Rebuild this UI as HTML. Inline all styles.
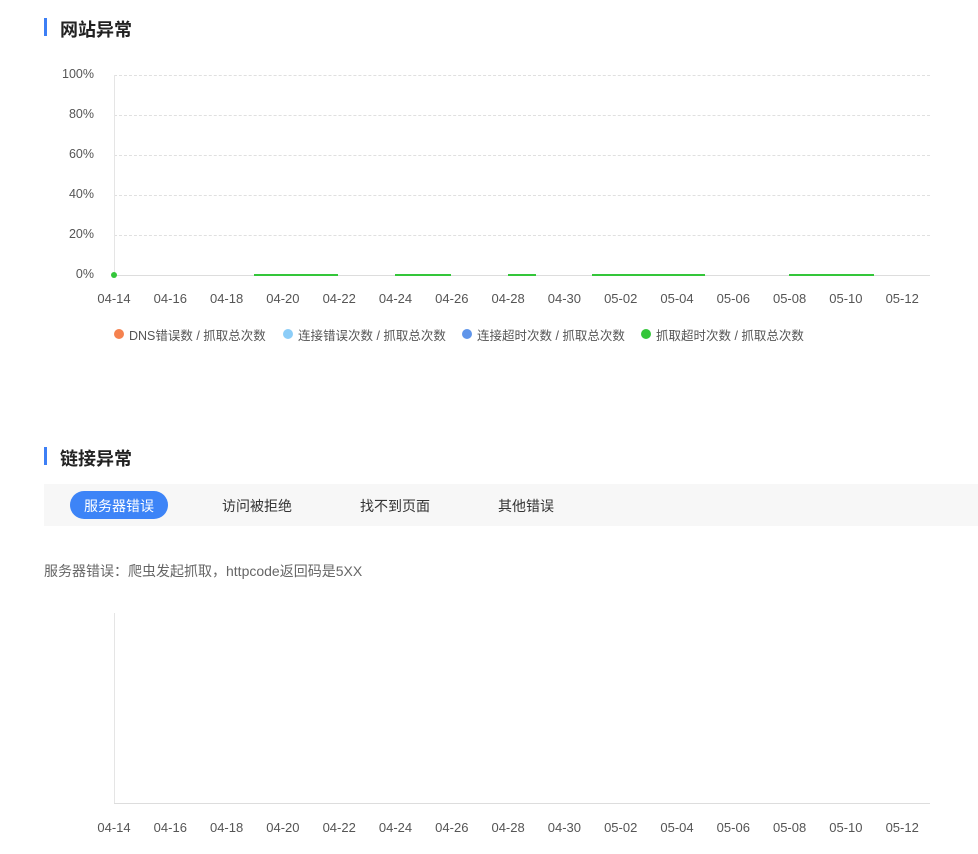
<!DOCTYPE html><html><head><meta charset="utf-8"><style>
body{margin:0;width:978px;height:854px;background:#fff;font-family:"Liberation Sans","Noto Sans CJK SC",sans-serif;position:relative;overflow:hidden;color:#333}
.a{position:absolute;white-space:nowrap}
.h{font-size:18px;font-weight:bold;color:#222}
.bar{position:absolute;left:44px;width:3px;height:18px;background:#3d7ff5}
.yl{font-size:12.5px;color:#555;text-align:right;width:40px;left:54px}
.xl{font-size:13px;color:#555;width:50px;text-align:center}
.g{position:absolute;left:114px;width:816px;border-top:1px dashed #e0e0e0;height:0}
.tab{font-size:14px;color:#333}
.lg{position:absolute;top:325px;font-size:12.5px;color:#555;white-space:nowrap}
.dot{position:absolute;top:329px;width:10px;height:10px;border-radius:50%}
</style></head><body>
<div class="bar" style="top:18px"></div><div class="a h" style="left:60px;top:16px">网站异常</div>
<div class="a yl" style="top:67px">100%</div><div class="a yl" style="top:107px">80%</div><div class="a yl" style="top:147px">60%</div><div class="a yl" style="top:187px">40%</div><div class="a yl" style="top:227px">20%</div><div class="a yl" style="top:267px">0%</div>
<div class="g" style="top:75px"></div><div class="g" style="top:115px"></div><div class="g" style="top:155px"></div><div class="g" style="top:195px"></div><div class="g" style="top:235px"></div>
<div class="a" style="left:114px;top:75px;width:1px;height:201px;background:#e5e5e5"></div>
<div class="a" style="left:114px;top:275px;width:816px;height:1px;background:#ddd"></div>
<div class="a" style="left:254px;top:274px;width:84px;height:2px;background:#34c63a"></div>
<div class="a" style="left:395px;top:274px;width:56px;height:2px;background:#34c63a"></div>
<div class="a" style="left:508px;top:274px;width:28px;height:2px;background:#34c63a"></div>
<div class="a" style="left:592px;top:274px;width:113px;height:2px;background:#34c63a"></div>
<div class="a" style="left:789px;top:274px;width:85px;height:2px;background:#34c63a"></div>
<div class="a" style="left:111px;top:272px;width:6px;height:6px;border-radius:50%;background:#34c63a"></div>
<div id="x1"></div>
<div class="dot" style="left:114px;background:#f5824f"></div><div class="lg" style="left:129px">DNS错误数 / 抓取总次数</div>
<div class="dot" style="left:283px;background:#8ccdf8"></div><div class="lg" style="left:298px">连接错误次数 / 抓取总次数</div>
<div class="dot" style="left:462px;background:#5f95ea"></div><div class="lg" style="left:477px">连接超时次数 / 抓取总次数</div>
<div class="dot" style="left:641px;background:#34c63a"></div><div class="lg" style="left:656px">抓取超时次数 / 抓取总次数</div>
<div class="bar" style="top:447px"></div><div class="a h" style="left:60px;top:445px">链接异常</div>
<div class="a" style="left:44px;top:484px;width:934px;height:42px;background:#f7f7f7"></div>
<div class="a" style="left:70px;top:491px;width:98px;height:28px;border-radius:14px;background:#3d84f7"></div>
<div class="a tab" style="left:84px;top:496px;color:#fff">服务器错误</div>
<div class="a tab" style="left:222px;top:496px">访问被拒绝</div>
<div class="a tab" style="left:360px;top:496px">找不到页面</div>
<div class="a tab" style="left:498px;top:496px">其他错误</div>
<div class="a" style="left:44px;top:561px;font-size:14px;color:#666">服务器错误：爬虫发起抓取，httpcode返回码是5XX</div>
<div class="a" style="left:114px;top:613px;width:1px;height:191px;background:#e5e5e5"></div>
<div class="a" style="left:114px;top:803px;width:816px;height:1px;background:#ddd"></div>
<div id="x2"></div>
<script>
var d=["04-14","04-16","04-18","04-20","04-22","04-24","04-26","04-28","04-30","05-02","05-04","05-06","05-08","05-10","05-12"],h="";
d.forEach(function(t,i){var x=114+i*56.3-25;h+='<div class="a xl" style="left:'+x+'px;top:291px">'+t+'</div><div class="a xl" style="left:'+x+'px;top:820px">'+t+'</div>';});
document.getElementById("x1").innerHTML=h;
</script>
</body></html>
